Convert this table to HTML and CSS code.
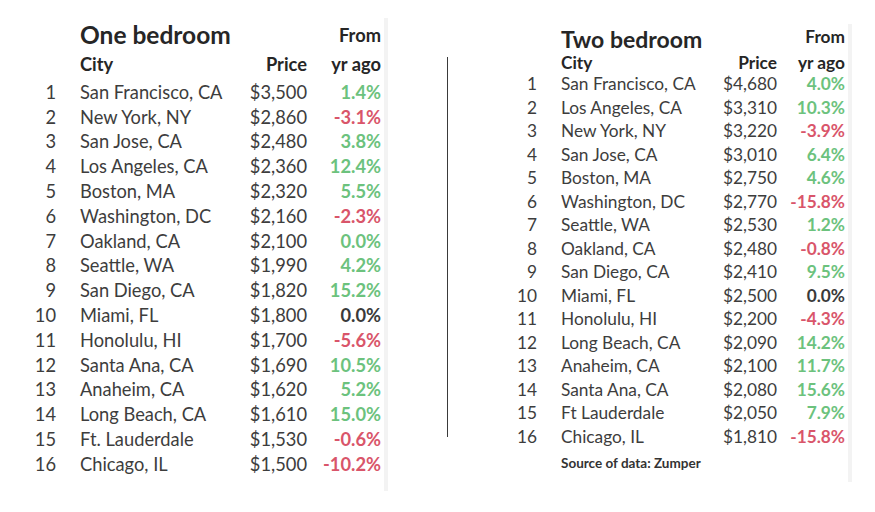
FILE: index.html
```html
<!DOCTYPE html>
<html lang="en">
<head>
<meta charset="utf-8">
<title>Rent rankings</title>
<link rel="stylesheet" href="styles.css">
</head>
<body>
<main class="page">
  <section class="panel one">
    <div class="grid">
      <div class="title">One bedroom</div><div class="from">From</div>
      <div class="num"></div><div class="hcity">City</div><div class="hprice">Price</div><div class="hpct">yr ago</div>
      <div class="num">1</div><div class="city">San Francisco, CA</div><div class="price">$3,500</div><div class="pct up">1.4%</div>
      <div class="num">2</div><div class="city">New York, NY</div><div class="price">$2,860</div><div class="pct down">-3.1%</div>
      <div class="num">3</div><div class="city">San Jose, CA</div><div class="price">$2,480</div><div class="pct up">3.8%</div>
      <div class="num">4</div><div class="city">Los Angeles, CA</div><div class="price">$2,360</div><div class="pct up">12.4%</div>
      <div class="num">5</div><div class="city">Boston, MA</div><div class="price">$2,320</div><div class="pct up">5.5%</div>
      <div class="num">6</div><div class="city">Washington, DC</div><div class="price">$2,160</div><div class="pct down">-2.3%</div>
      <div class="num">7</div><div class="city">Oakland, CA</div><div class="price">$2,100</div><div class="pct up">0.0%</div>
      <div class="num">8</div><div class="city">Seattle, WA</div><div class="price">$1,990</div><div class="pct up">4.2%</div>
      <div class="num">9</div><div class="city">San Diego, CA</div><div class="price">$1,820</div><div class="pct up">15.2%</div>
      <div class="num">10</div><div class="city">Miami, FL</div><div class="price">$1,800</div><div class="pct flat">0.0%</div>
      <div class="num">11</div><div class="city">Honolulu, HI</div><div class="price">$1,700</div><div class="pct down">-5.6%</div>
      <div class="num">12</div><div class="city">Santa Ana, CA</div><div class="price">$1,690</div><div class="pct up">10.5%</div>
      <div class="num">13</div><div class="city">Anaheim, CA</div><div class="price">$1,620</div><div class="pct up">5.2%</div>
      <div class="num">14</div><div class="city">Long Beach, CA</div><div class="price">$1,610</div><div class="pct up">15.0%</div>
      <div class="num">15</div><div class="city">Ft. Lauderdale</div><div class="price">$1,530</div><div class="pct down">-0.6%</div>
      <div class="num">16</div><div class="city">Chicago, IL</div><div class="price">$1,500</div><div class="pct down">-10.2%</div>
    </div>
  </section>
  <div class="divider"></div>
  <section class="panel two">
    <div class="grid">
      <div class="title">Two bedroom</div><div class="from">From</div>
      <div class="num"></div><div class="hcity">City</div><div class="hprice">Price</div><div class="hpct">yr ago</div>
      <div class="num">1</div><div class="city">San Francisco, CA</div><div class="price">$4,680</div><div class="pct up">4.0%</div>
      <div class="num">2</div><div class="city">Los Angeles, CA</div><div class="price">$3,310</div><div class="pct up">10.3%</div>
      <div class="num">3</div><div class="city">New York, NY</div><div class="price">$3,220</div><div class="pct down">-3.9%</div>
      <div class="num">4</div><div class="city">San Jose, CA</div><div class="price">$3,010</div><div class="pct up">6.4%</div>
      <div class="num">5</div><div class="city">Boston, MA</div><div class="price">$2,750</div><div class="pct up">4.6%</div>
      <div class="num">6</div><div class="city">Washington, DC</div><div class="price">$2,770</div><div class="pct down">-15.8%</div>
      <div class="num">7</div><div class="city">Seattle, WA</div><div class="price">$2,530</div><div class="pct up">1.2%</div>
      <div class="num">8</div><div class="city">Oakland, CA</div><div class="price">$2,480</div><div class="pct down">-0.8%</div>
      <div class="num">9</div><div class="city">San Diego, CA</div><div class="price">$2,410</div><div class="pct up">9.5%</div>
      <div class="num">10</div><div class="city">Miami, FL</div><div class="price">$2,500</div><div class="pct flat">0.0%</div>
      <div class="num">11</div><div class="city">Honolulu, HI</div><div class="price">$2,200</div><div class="pct down">-4.3%</div>
      <div class="num">12</div><div class="city">Long Beach, CA</div><div class="price">$2,090</div><div class="pct up">14.2%</div>
      <div class="num">13</div><div class="city">Anaheim, CA</div><div class="price">$2,100</div><div class="pct up">11.7%</div>
      <div class="num">14</div><div class="city">Santa Ana, CA</div><div class="price">$2,080</div><div class="pct up">15.6%</div>
      <div class="num">15</div><div class="city">Ft Lauderdale</div><div class="price">$2,050</div><div class="pct up">7.9%</div>
      <div class="num">16</div><div class="city">Chicago, IL</div><div class="price">$1,810</div><div class="pct down">-15.8%</div>
      <div class="num"></div><div class="source">Source of data: Zumper</div>
    </div>
  </section>
</main>
</body>
</html>
```
FILE: styles.css
```css
html, body {
  margin: 0;
  padding: 0;
  background: #ffffff;
}
body {
  width: 875px;
  height: 512px;
  overflow: hidden;
  font-family: Lato, "Open Sans", "Liberation Sans", sans-serif;
  color: #3d3d3d;
}
.page {
  display: flex;
  align-items: flex-start;
  padding-left: 30px;
}
.panel {
  border-right: 4px solid #f3f3f3;
}
.panel.one {
  margin-top: 18px;
  padding: 3px 3px 14px 0;
}
.panel.two {
  margin-top: 24px;
  margin-left: 65px;
  padding: 4px 3px 10px 0;
}
.divider {
  width: 1px;
  height: 380px;
  margin-top: 57px;
  margin-left: 59px;
  background: #3a3a3a;
}
.grid {
  display: grid;
  align-items: center;
  white-space: nowrap;
  line-height: 1.15;
}
.one .grid {
  grid-template-columns: 26px 184px 67px 74px;
  grid-template-rows: 29px 30px;
  grid-auto-rows: 24.8px;
  font-size: 18.3px;
}
.two .grid {
  grid-template-columns: 24px 178px 62px 68px;
  grid-template-rows: 26px 18.25px;
  grid-auto-rows: 23.5px;
  font-size: 17.3px;
}
.title {
  grid-column: 2 / 4;
  padding-left: 24px;
  font-size: 24.5px;
  font-weight: 700;
  line-height: 1;
  color: #262626;
}
.two .title {
  font-size: 23px;
  align-self: start;
}
.from, .hcity, .hprice, .hpct {
  font-weight: 700;
  color: #262626;
}
.two .from {
  align-self: start;
  line-height: 1.05;
}
.two .hcity, .two .hprice, .two .hpct {
  line-height: 1.05;
}
.from, .hpct, .hprice, .price, .pct, .num {
  text-align: right;
}
.hcity, .city {
  padding-left: 24px;
}
.pct {
  font-weight: 700;
}
.up { color: #6cc27d; }
.down { color: #d9556a; }
.flat { color: #3a3a3a; }
.source {
  grid-column: 2 / 5;
  padding-left: 24px;
  padding-top: 8px;
  font-size: 13.5px;
  font-weight: 700;
  color: #333333;
}
```
